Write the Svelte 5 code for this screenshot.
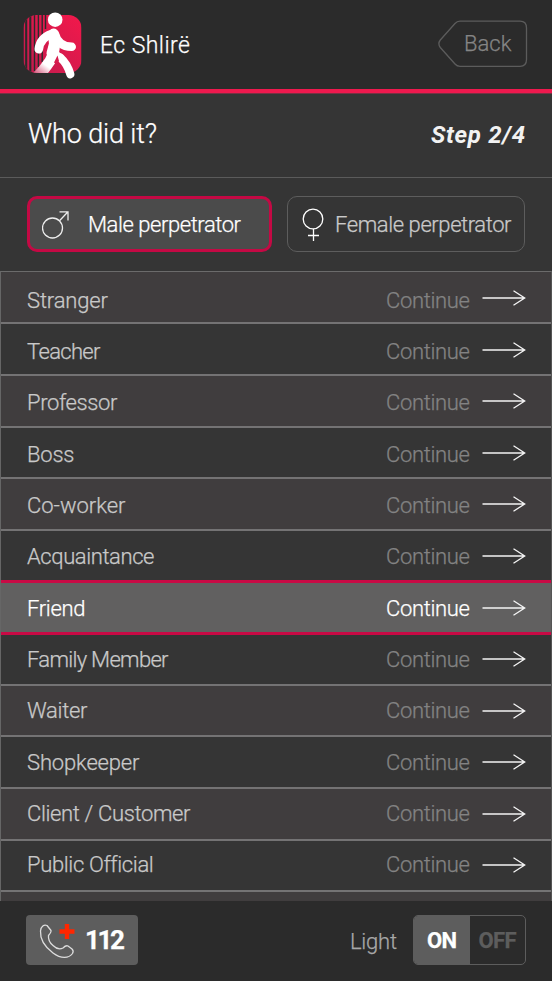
<script>
  const rows = [
    ['Stranger', 81], ['Teacher', 73.5], ['Professor', 90.5], ['Boss', 47.5],
    ['Co-worker', 98.5], ['Acquaintance', 127.5], ['Friend', 58.5], ['Family Member', 141.5],
    ['Waiter', 60.5], ['Shopkeeper', 112.5], ['Client / Customer', 163.5], ['Public Official', 125.5]
  ];
  let selected = $state('Friend');
  let gender = $state('male');

  // Tracks the text so that it spans the given width.
  function fit(node, width) {
    node.style.width = 'max-content';
    const natural = node.getBoundingClientRect().width;
    node.style.letterSpacing = (width - natural) / (node.textContent.length - 1) + 'px';
    node.style.width = width + 'px';
  }
</script>

<div class="screen">
  <header>
    <svg class="logo" width="62" height="70" viewBox="0 0 62 70">
      <defs>
        <linearGradient id="tile" x1="0" y1="1" x2="1" y2="0">
          <stop offset="0" stop-color="#c01c4e" /><stop offset="1" stop-color="#f3184b" />
        </linearGradient>
        <linearGradient id="leg" gradientUnits="userSpaceOnUse" x1="14" y1="64" x2="21" y2="54">
          <stop offset="0" stop-color="#fff" stop-opacity="0.3" /><stop offset="1" stop-color="#fff" />
        </linearGradient>
        <clipPath id="tileClip"><rect x="0.5" y="5" width="58" height="58" rx="13" /></clipPath>
      </defs>
      <g clip-path="url(#tileClip)">
        <rect x="0.5" y="5" width="58" height="58" fill="url(#tile)" />
        <path d="M3.2 5v58M7.3 5v58" stroke="#2b2b2b" stroke-width="2.1" />
        <path d="M11.5 5v56M15.4 5v52M19.2 5v47M22.5 5v14" stroke="#2b2b2b" stroke-width="1.4" />
        <path d="M30.500 24Q33.500 40 27 51Q21 60 14 67" fill="none" stroke="url(#leg)" stroke-width="11" />
      </g>
      <g fill="none" stroke="#fff" stroke-linecap="round" stroke-linejoin="round">
        <path d="M28.500 24Q17 28 15.800 39.300" stroke-width="8.600" />
        <path d="M32 24Q35 36.500 48.800 36.800" stroke-width="8.400" />
        <path d="M30.500 23.500L31 34L28.500 43" stroke-width="10" />
        <path d="M37.300 47.500Q44.500 54 47.300 64.200" stroke-width="8.200" />
      </g>
      <path d="M31 36L36 42L41 46L36 51L31 46Z" fill="#fff" />
      <path d="M34.500 45.500L36 51L33.500 54L31 52.500Z" fill="#d71c4d" />
      <circle cx="32.200" cy="9.700" r="7.300" fill="#fff" />
    </svg>
    <span class="brand" use:fit={90}>Ec Shlirë</span>
    <button class="back">
      <svg width="90" height="48" viewBox="0 0 90 48" fill="none" stroke="#5c5c5c" stroke-width="1.3">
        <path d="M22 1.2H82Q88.5 1.2 88.5 8V39.5Q88.5 46.3 82 46.3H22Q19 46.3 17 44L2.3 27.5Q-.5 23.7 2.3 20L17 3.500Q19 1.200 22 1.200Z" />
      </svg>
      <span class="back-label"><span use:fit={47.5}>Back</span></span>
    </button>
  </header>

  <section class="title">
    <span class="question" use:fit={129}>Who did it?</span>
    <span class="step" use:fit={94}>Step 2/4</span>
  </section>

  <section class="tabs">
    <button class="tab male" class:active={gender === 'male'} onclick={() => (gender = 'male')}>
      <svg width="28" height="30" viewBox="0 0 28 30" fill="none" stroke="#eee" stroke-width="1.3">
        <circle cx="10.5" cy="19" r="10" /><path d="M17.500 11.800L25.500 3.200M17.500 2.800H26V11.500" />
      </svg>
      <span use:fit={153}>Male perpetrator</span>
    </button>
    <button class="tab female" class:active={gender === 'female'} onclick={() => (gender = 'female')}>
      <svg width="22" height="34" viewBox="0 0 22 34" fill="none" stroke="#fff" stroke-width="1.3">
        <circle cx="11" cy="11" r="9.8" /><path d="M11.500 21V33M6 27.500H17" />
      </svg>
      <span use:fit={176.5}>Female perpetrator</span>
    </button>
  </section>

  <main>
    {#each rows as [name, width], i}
      <button class="row" class:selected={selected === name} onclick={() => (selected = name)}>
        <span class="name" style:margin-top="{7 - i * 0.68}px"><span use:fit={width}>{name}</span></span>
        <span class="go" style:margin-top="{7 - i * 0.68}px"><span use:fit={84}>Continue</span></span>
        <svg class="arrow" style:margin-top="{1.5 - i * 0.2}px" width="44" height="18" viewBox="0 0 44 18" fill="none" stroke="#f4f4f4" stroke-width="1.3">
          <path d="M.5 9H42.5M31.5 1.8L42.7 9L31.5 16.2" />
        </svg>
      </button>
    {/each}
    <div class="row"></div>
  </main>

  <footer>
    <button class="call">
      <svg width="38" height="38" viewBox="0 0 38 38" fill="none">
        <path d="M1.500 9C2 4 5 2.500 8 3.500L12 8.500Q12.500 10 9.500 13.500C9 18 11 21 14 23.500C17 26.500 21 27.500 24 26Q27 23 29 24L33 27Q35 29 33.500 31.500C30 36.500 22 37 14 31C6 25 1 17 1.500 9Z" stroke="#ddd" stroke-width="1.300" stroke-linejoin="round" />
        <path d="M28 2V17M20.500 9.500H35.500" stroke="#ff2600" stroke-width="4.400" />
      </svg>
      <span use:fit={40}>112</span>
    </button>
    <span class="light"><span use:fit={47}>Light</span></span>
    <div class="switch">
      <span class="on"><span use:fit={30}>ON</span></span>
      <span class="off"><span use:fit={38}>OFF</span></span>
    </div>
  </footer>
</div>

<style>
  :global(body) { margin: 0; background: #2b2b2b; }
  .screen {
    width: 552px; height: 981px; overflow: hidden; display: flex; flex-direction: column;
    background: #353535; color: #c9c9c9; font: 300 22px/26px Roboto, "Noto Sans", sans-serif;
    -webkit-text-stroke: 0.25px currentColor;
  }
  .screen * { box-sizing: border-box; }
  button { margin: 0; padding: 0; border: 0; background: none; color: inherit; font: inherit; text-align: left; }
  span { white-space: nowrap; display: block; flex: none; }
  svg { flex: none; display: block; }
  header {
    flex: none; height: 93px; padding: 0 25px 0 23px; display: flex; align-items: center;
    background: #2b2b2b; border-bottom: 4px solid #ee194e;
  }
  .logo { margin-top: 1px; }
  .brand { margin: 2px 0 0 15px; font-size: 23px; color: #fff; }
  .back { margin: -2px -1px 0 auto; display: grid; color: #858585; }
  .back svg, .back-label { grid-area: 1 / 1; }
  .back-label { padding: 11px 0 0 26px; }
  .title {
    flex: none; height: 85px; padding: 0 27px 3px 28px; display: flex; align-items: center;
    justify-content: space-between; border-top: 1px solid #793043; border-bottom: 1px solid #5b5b5b;
  }
  .question { font-size: 27px; color: #fff; }
  .step { margin-top: 2px; font-size: 24px; font-style: italic; font-weight: 700; color: #f2f2f2; -webkit-text-stroke: 0; }
  .tabs { flex: none; height: 93px; padding: 18px 27px 19px; display: flex; gap: 15px; }
  .tab { display: flex; align-items: center; border: 1px solid #5d5d5d; border-radius: 10px; height: 56px; }
  .tab span { margin-top: 2px; }
  .male { width: 245px; padding-left: 12px; gap: 18px; }
  .female { width: 238px; padding-left: 14px; gap: 11px; }
  .female svg { margin-top: 1px; }
  .tab.active { background: #4b4b4b; border: 3px solid #c40944; color: #fff; }
  main { flex: none; height: 630px; overflow: hidden; border-left: 1px solid #666; border-right: 1px solid #555; border-top: 1px solid #6b6b6b; }
  .row {
    position: relative; width: 100%; height: 51.67px; padding: 0 25px 0 26px; display: flex;
    align-items: center; background: #353535; border-bottom: 2px solid #747374;
  }
  .row:nth-child(odd) { background: #403d3e; }
  .row:first-child { height: 52.2px; }
  .go { margin-left: auto; color: #838383; }
  .arrow { margin-left: 12px; }
  .row.selected {
    z-index: 1; width: calc(100% + 2px); height: 54.67px; margin: -2px -1px -1px; padding: 0 26px 0 27px;
    background: #616060; border-top: 3px solid #c80a45; border-bottom: 3px solid #c80a45; color: #fff;
  }
  .selected .go { color: #fff; }
  footer { flex: none; height: 80px; padding: 0 26px; display: flex; align-items: center; background: #2b2b2b; }
  .call {
    width: 112px; height: 50px; margin-top: -2px; padding-left: 13px; display: flex; align-items: center; gap: 8px;
    background: #5d5d5d; border-radius: 4px; color: #fff; font-size: 26px; font-weight: 700;
  }
  .call svg { margin-top: 2px; }
  .light { margin: 1px 16px 0 auto; color: #a8a8a8; }
  .switch {
    width: 113px; height: 50px; margin-top: -2px; display: flex; border: 1px solid #5d5d5d;
    border-radius: 5px; overflow: hidden; font-weight: 700;
  }
  .on, .off { width: 56px; padding-top: 1px; display: flex; align-items: center; justify-content: center; background: #5d5d5d; color: #fff; }
  .off { width: 55px; background: none; color: #5d5d5d; }
</style>
